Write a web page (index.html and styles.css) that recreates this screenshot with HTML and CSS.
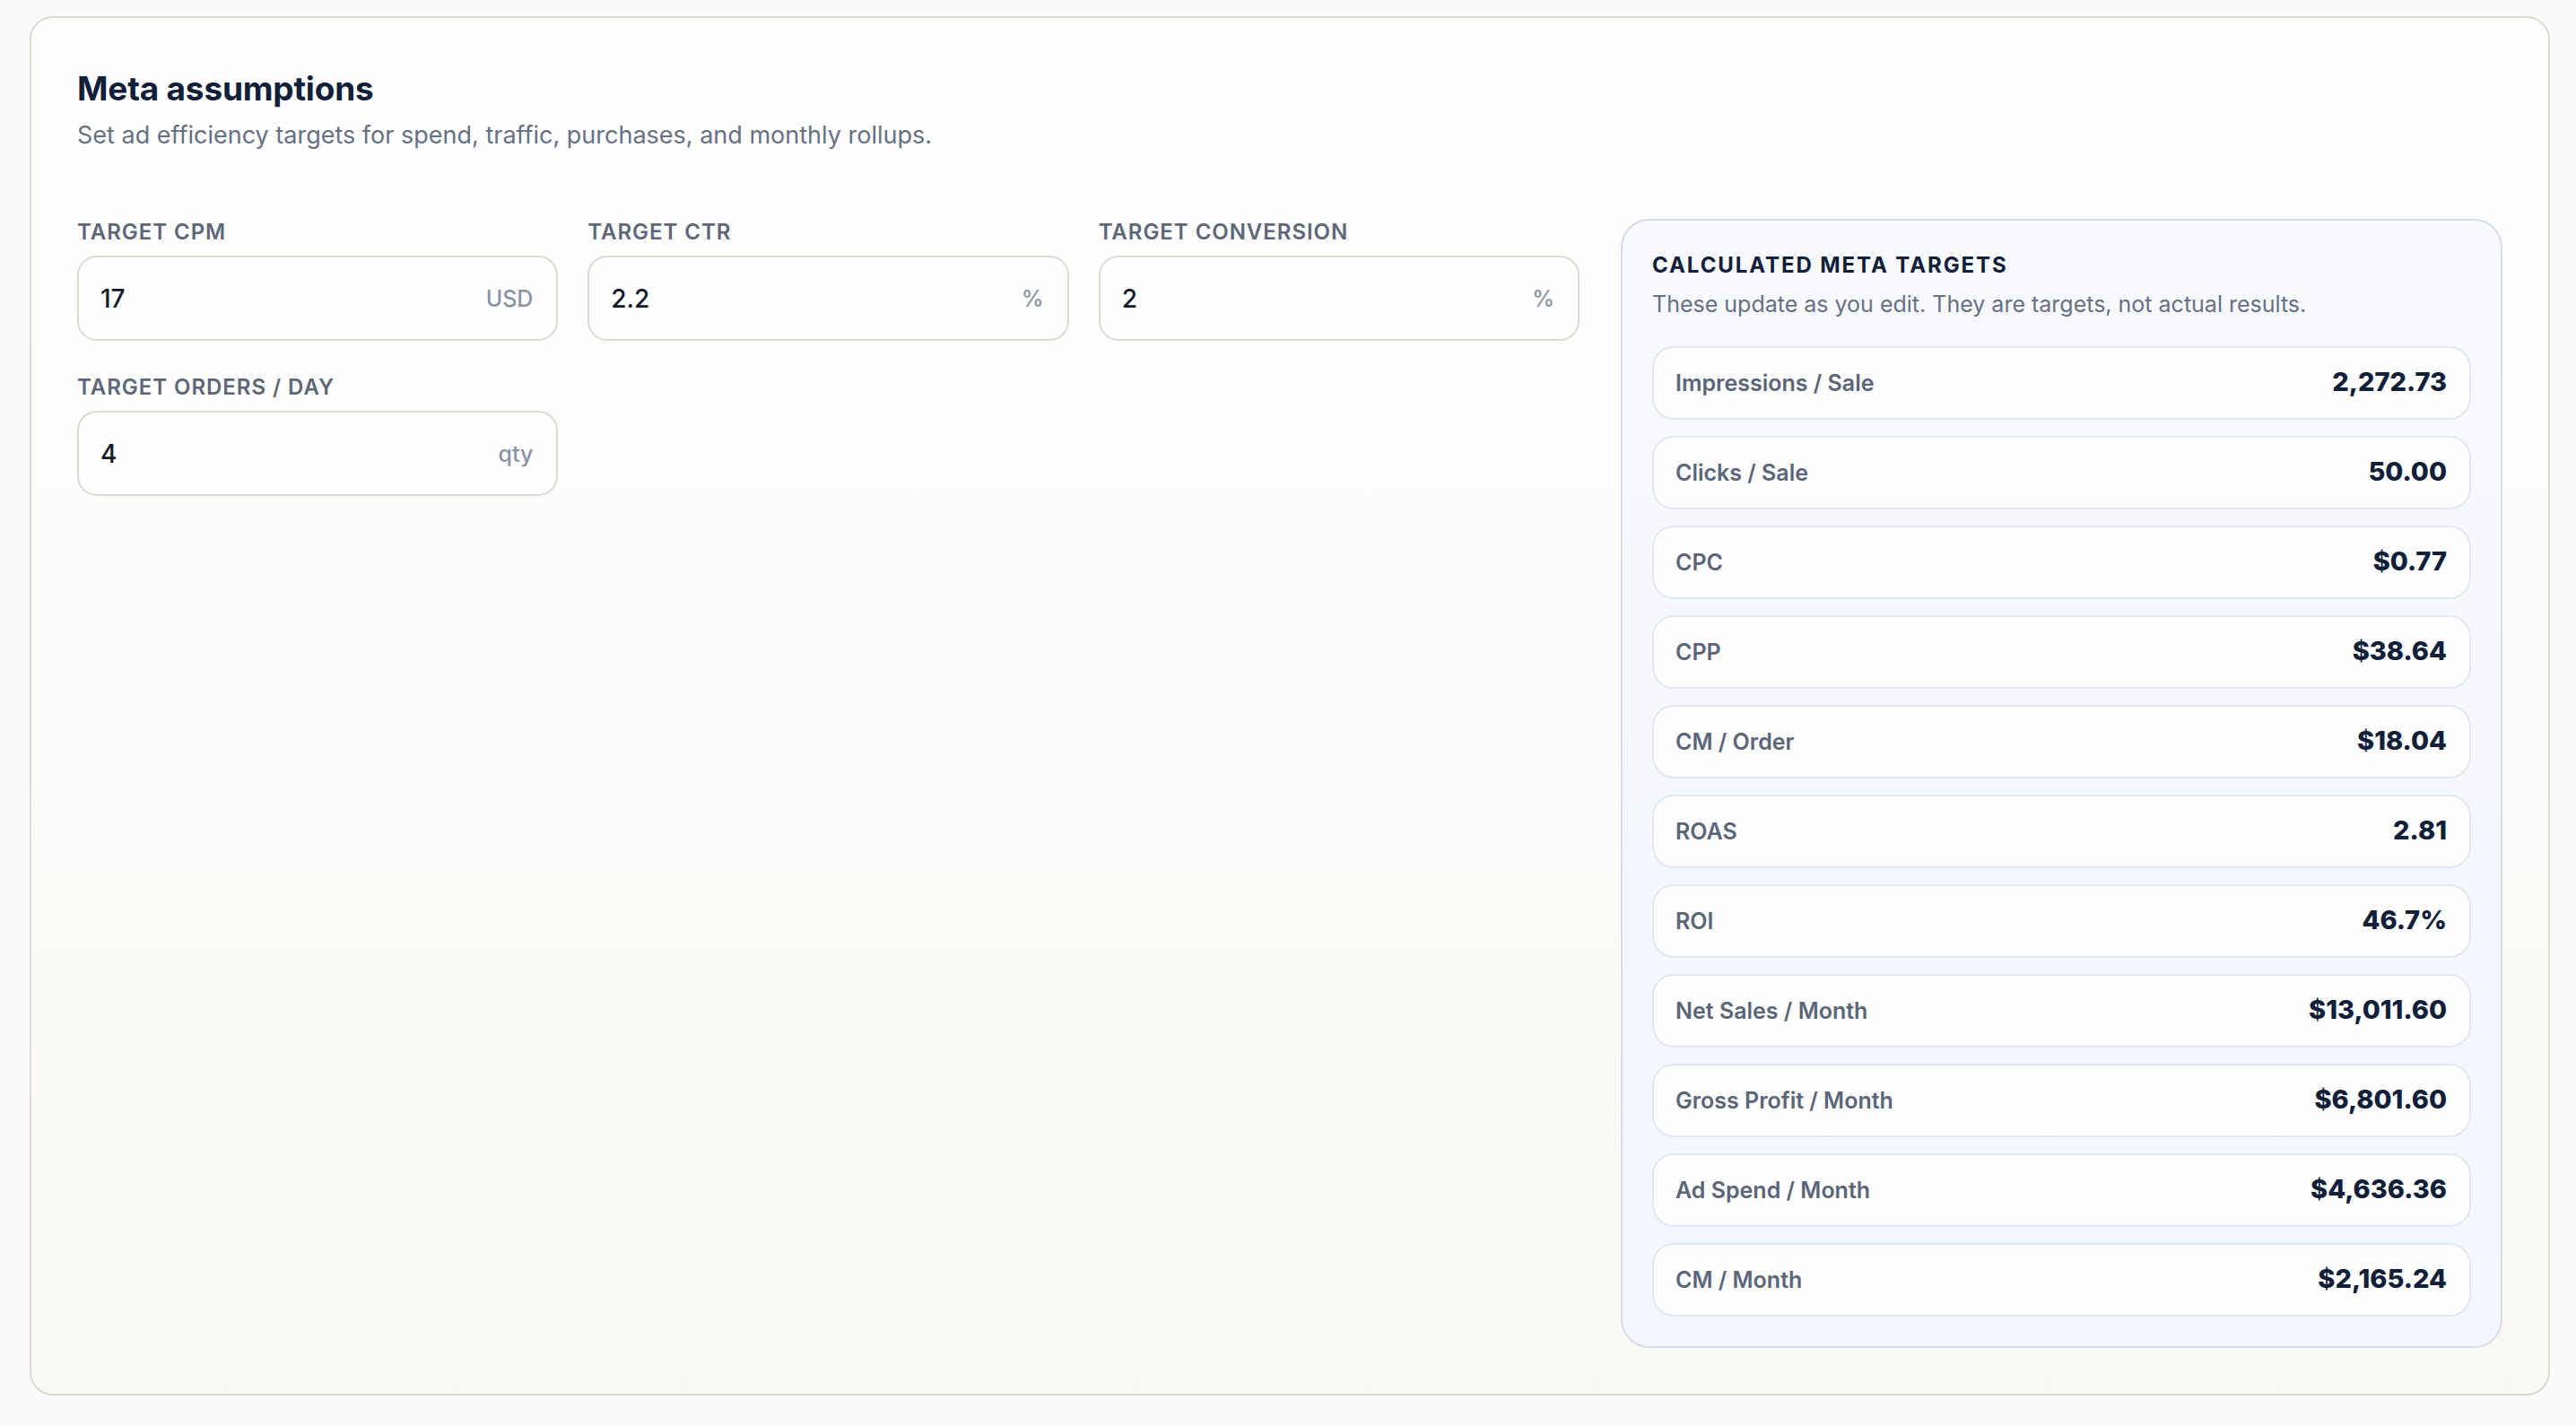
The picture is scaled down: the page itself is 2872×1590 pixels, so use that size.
FILE: index.html
```html
<!DOCTYPE html>
<html lang="en">
<head>
<meta charset="utf-8">
<title>Meta assumptions</title>
<link rel="stylesheet" href="styles.css">
</head>
<body>
<section class="card">
  <h1 class="title">Meta assumptions</h1>
  <p class="subtitle">Set ad efficiency targets for spend, traffic, purchases, and monthly rollups.</p>
  <div class="layout">
    <div class="fields">
      <label class="field">
        <span class="field-label">Target CPM</span>
        <span class="input"><span class="input-value">17</span><span class="input-unit">USD</span></span>
      </label>
      <label class="field">
        <span class="field-label">Target CTR</span>
        <span class="input"><span class="input-value">2.2</span><span class="input-unit">%</span></span>
      </label>
      <label class="field">
        <span class="field-label">Target Conversion</span>
        <span class="input"><span class="input-value">2</span><span class="input-unit">%</span></span>
      </label>
      <label class="field">
        <span class="field-label">Target Orders / Day</span>
        <span class="input"><span class="input-value">4</span><span class="input-unit">qty</span></span>
      </label>
    </div>
    <aside class="panel">
      <h2 class="panel-title">Calculated Meta Targets</h2>
      <p class="panel-sub">These update as you edit. They are targets, not actual results.</p>
      <ul class="metrics">
        <li class="metric"><span class="metric-label">Impressions / Sale</span><span class="metric-value">2,272.73</span></li>
        <li class="metric"><span class="metric-label">Clicks / Sale</span><span class="metric-value">50.00</span></li>
        <li class="metric"><span class="metric-label">CPC</span><span class="metric-value">$0.77</span></li>
        <li class="metric"><span class="metric-label">CPP</span><span class="metric-value">$38.64</span></li>
        <li class="metric"><span class="metric-label">CM / Order</span><span class="metric-value">$18.04</span></li>
        <li class="metric"><span class="metric-label">ROAS</span><span class="metric-value">2.81</span></li>
        <li class="metric"><span class="metric-label">ROI</span><span class="metric-value">46.7%</span></li>
        <li class="metric"><span class="metric-label">Net Sales / Month</span><span class="metric-value">$13,011.60</span></li>
        <li class="metric"><span class="metric-label">Gross Profit / Month</span><span class="metric-value">$6,801.60</span></li>
        <li class="metric"><span class="metric-label">Ad Spend / Month</span><span class="metric-value">$4,636.36</span></li>
        <li class="metric"><span class="metric-label">CM / Month</span><span class="metric-value">$2,165.24</span></li>
      </ul>
    </aside>
  </div>
</section>
</body>
</html>
```
FILE: styles.css
```css
* { box-sizing: border-box; }

html, body {
  margin: 0;
  background: #fafafa;
}

body {
  padding: 18px 29px 35px 33px;
  font-family: "Inter", "Liberation Sans", sans-serif;
  color: #10203a;
}

.card {
  border: 2px solid #dedad2;
  border-radius: 26px;
  background: linear-gradient(180deg, #fefefe 0%, #fcfcfb 40%, #f9f8f4 100%);
  padding: 52px 51px 51px 51px;
}

.title {
  margin: 5px 0 0 0;
  font-size: 37px;
  line-height: 44px;
  font-weight: 700;
  color: #10203a;
  letter-spacing: -0.005em;
}

.subtitle {
  margin: 11px 0 0 0;
  font-size: 27px;
  line-height: 37px;
  color: #667085;
}

.layout {
  margin-top: 75px;
  display: grid;
  grid-template-columns: minmax(0, 1fr) 983px;
  column-gap: 46px;
  align-items: start;
}

.fields {
  margin-top: 0;
  display: grid;
  grid-template-columns: repeat(3, minmax(0, 1fr));
  column-gap: 33px;
  row-gap: 37px;
}

.field {
  display: flex;
  flex-direction: column;
  gap: 12px;
}

.field-label {
  font-size: 24px;
  line-height: 29px;
  font-weight: 600;
  letter-spacing: 0.04em;
  text-transform: uppercase;
  color: #5d6779;
}

.input {
  height: 95px;
  display: flex;
  align-items: center;
  justify-content: space-between;
  border: 2px solid #ddd9d1;
  border-radius: 22px;
  background: #fefefe;
  padding: 0 26px 0 24px;
}

.input-value {
  font-size: 28px;
  font-weight: 500;
  color: #111a2b;
}

.input-unit {
  font-size: 25px;
  font-weight: 500;
  color: #8a93a5;
}

.panel {
  border: 2px solid #d5dcea;
  border-radius: 32px;
  background: linear-gradient(180deg, #f8f9fc 0%, #f5f7fd 50%, #f2f6fe 100%);
  padding: 35px 33px 33px 33px;
}

.panel-title {
  margin: 0;
  font-size: 24px;
  line-height: 29px;
  font-weight: 700;
  letter-spacing: 0.08em;
  text-transform: uppercase;
  color: #10203a;
}

.panel-sub {
  margin: 11px 0 0 0;
  font-size: 25px;
  line-height: 36px;
  color: #667085;
}

.metrics {
  list-style: none;
  margin: 29px 0 0 0;
  padding: 0;
  display: flex;
  flex-direction: column;
  gap: 18px;
}

.metric {
  height: 82px;
  display: flex;
  align-items: center;
  justify-content: space-between;
  border: 2px solid #e3e8f0;
  border-radius: 24px;
  background: #fdfdfe;
  padding: 0 25px 0 24px;
}

.metric-label {
  font-size: 25px;
  font-weight: 600;
  color: #5b6579;
}

.metric-value {
  font-size: 29px;
  font-weight: 800;
  color: #10203a;
  margin-top: -4px;
}
```
